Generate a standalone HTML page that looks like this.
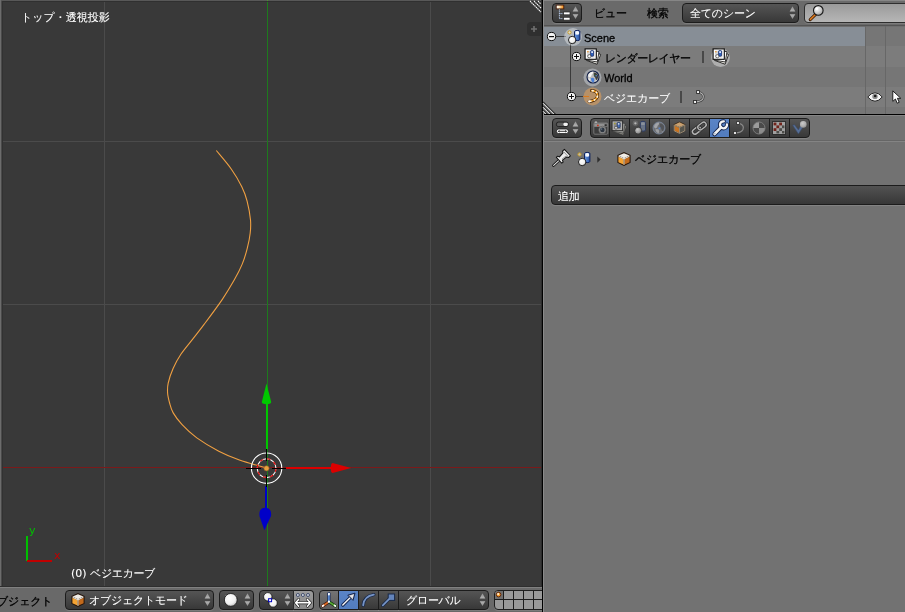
<!DOCTYPE html>
<html lang="ja">
<head>
<meta charset="utf-8">
<title>Blender</title>
<style>
html,body{margin:0;padding:0;}
body{width:905px;height:612px;overflow:hidden;position:relative;background:#727272;
  font-family:"DejaVu Sans","Liberation Sans","WenQuanYi Zen Hei","Noto Sans CJK JP",sans-serif;font-size:11px;line-height:14px;color:#000;}
.abs{position:absolute;}
.t{position:absolute;white-space:nowrap;font-size:11px;line-height:14px;will-change:transform;-webkit-text-stroke:0.3px currentColor;}
.w{color:#fff;-webkit-text-stroke:0.08px currentColor;}
.cj{letter-spacing:-0.2px;}
.la{font-family:"Liberation Sans","DejaVu Sans",sans-serif;}
.btn{position:absolute;box-sizing:border-box;border:1px solid #1c1c1c;border-radius:4px;
  background:linear-gradient(#555555,#383838);box-shadow:0 1px 0 rgba(255,255,255,0.12);}
.ud{position:absolute;width:7px;height:14px;}
svg{position:absolute;overflow:visible;}
</style>
</head>
<body>

<svg width="0" height="0" style="position:absolute;left:-100px;top:-100px;">
  <defs>
    <linearGradient id="gUD" x1="0" y1="0" x2="0" y2="1"><stop offset="0" stop-color="#8e8e8e"/><stop offset="1" stop-color="#b4b4b4"/></linearGradient>
    <linearGradient id="gDU" x1="0" y1="0" x2="0" y2="1"><stop offset="0" stop-color="#b4b4b4"/><stop offset="1" stop-color="#8e8e8e"/></linearGradient>
    <radialGradient id="gSph" cx="0.4" cy="0.35" r="0.75"><stop offset="0" stop-color="#ffffff"/><stop offset="0.6" stop-color="#f0f0f0"/><stop offset="1" stop-color="#b0b0b0"/></radialGradient>
    <radialGradient id="gSphD" cx="0.4" cy="0.35" r="0.75"><stop offset="0" stop-color="#c8c8c8"/><stop offset="0.6" stop-color="#9a9a9a"/><stop offset="1" stop-color="#5a5a5a"/></radialGradient>
    <linearGradient id="gCyl" x1="0" y1="0" x2="1" y2="0"><stop offset="0" stop-color="#6a98e0"/><stop offset="1" stop-color="#2a56a8"/></linearGradient>
    <radialGradient id="gLens" cx="0.35" cy="0.3" r="0.8"><stop offset="0" stop-color="#ffffff"/><stop offset="0.5" stop-color="#d0d0d0"/><stop offset="1" stop-color="#9a9a9a"/></radialGradient>
    <linearGradient id="gBox" x1="0" y1="0" x2="1" y2="0"><stop offset="0" stop-color="#ffffff"/><stop offset="0.35" stop-color="#fff0d0"/><stop offset="1" stop-color="#f08000"/></linearGradient>

    <!-- up/down arrows 7x14 -->
    <symbol id="ud" viewBox="0 0 7 14">
      <path d="M3.5 0.3 L6.3 5.6 H0.7 Z" fill="url(#gUD)"/>
      <path d="M0.7 8.2 H6.3 L3.5 13.1 Z" fill="url(#gDU)"/>
    </symbol>

    <!-- orange cube 14x14 -->
    <symbol id="cube" viewBox="0 0 14 14">
      <path d="M7 0.1 L13.6 3.1 V10.8 L7 13.9 L0.4 10.8 V3.1 Z" fill="#24140a"/>
      <path d="M7 1.2 L12.4 3.6 L7 6.2 L1.6 3.6 Z" fill="#efece6"/>
      <path d="M1.4 4.7 L6.4 7.1 V12.6 L1.4 10.2 Z" fill="#f5a433"/>
      <path d="M12.6 4.7 L7.6 7.1 V12.6 L12.6 10.2 Z" fill="#c26a1c"/>
      <path d="M1.5 4.2 L7 6.9 L12.5 4.2" fill="none" stroke="#fffaf0" stroke-width="1"/>
      <path d="M7 6.9 V12.9" fill="none" stroke="#ffe6c0" stroke-width="1"/>
    </symbol>

    <!-- dimmed cube (object tab) -->
    <symbol id="cubeD" viewBox="0 0 14 14">
      <path d="M7 0.4 L13.2 3.2 V10.6 L7 13.6 L0.8 10.6 V3.2 Z" fill="#3a2a1a"/>
      <path d="M7 1.2 L12.4 3.7 L7 6.2 L1.6 3.7 Z" fill="#c8a070"/>
      <path d="M1.7 4.6 L6.5 6.9 V12.4 L1.7 10.1 Z" fill="#c87422"/>
      <path d="M12.3 4.6 L7.5 6.9 V12.4 L12.3 10.1 Z" fill="#55554e"/>
      <path d="M1.5 4.1 L7 6.8 L12.5 4.1 M7 6.8 V12.8 M1.3 4 V10.4 L7 13.1 L12.7 10.4 V4" fill="none" stroke="#b8a890" stroke-width="0.8"/>
    </symbol>

    <!-- scene icon 16x16 -->
    <symbol id="scene" viewBox="0 0 16 16">
      <circle cx="3.5" cy="3.4" r="1.6" fill="#fff8e0" fill-opacity="0.55" stroke="#c79a1e" stroke-width="0.95"/>
      <path d="M8.5 2.6 Q8.5 1.4 11.2 1.4 Q13.9 1.4 13.9 2.6 V10.4 Q13.9 11.6 11.2 11.6 Q8.5 11.6 8.5 10.4 Z" fill="url(#gCyl)" stroke="#10225c" stroke-width="1"/>
      <path d="M9.3 3 Q9.3 2.1 11.2 2.1 Q13.1 2.1 13.1 3 V5 Q13.1 5.8 11.2 5.8 Q9.3 5.8 9.3 5 Z" fill="#f6f8fc"/>
      <circle cx="6.2" cy="11" r="3.7" fill="url(#gSph)" stroke="#111" stroke-width="0.9"/>
    </symbol>

    <!-- scene icon dimmed -->
    <symbol id="sceneD" viewBox="0 0 16 16">
      <circle cx="3.5" cy="3.4" r="2.8" fill="#a0a0a0" opacity="0.3"/>
      <circle cx="3.5" cy="3.4" r="1.2" fill="#b8b8b8"/>
      <path d="M8.6 2.6 Q8.6 1.4 11.3 1.4 Q14 1.4 14 2.6 V10.4 Q14 11.6 11.3 11.6 Q8.6 11.6 8.6 10.4 Z" fill="#687386" stroke="#2c3c64" stroke-width="1"/>
      <path d="M9.4 3 Q9.4 2.2 11.3 2.2 Q13.2 2.2 13.2 3 V4.6 Q13.2 5.2 11.3 5.2 Q9.4 5.2 9.4 4.6 Z" fill="#8a919c"/>
      <circle cx="6.4" cy="11" r="3.6" fill="url(#gSphD)" stroke="#2e2e2e" stroke-width="0.8"/>
    </symbol>

    <!-- render layers 18x17 -->
    <symbol id="rlayer" viewBox="0 0 18 17">
      <g transform="rotate(20 8 8)"><rect x="4.6" y="3.6" width="11" height="10.4" fill="#f2f0ea" stroke="#1a1a1a" stroke-width="0.8"/><rect x="6.2" y="5.2" width="7.8" height="7.2" fill="#e0d4bc"/></g>
      <g transform="rotate(10 8 8)"><rect x="3.2" y="2.6" width="11" height="10.4" fill="#fbfbfb" stroke="#1a1a1a" stroke-width="0.8"/><rect x="4.8" y="4.2" width="7.8" height="7.2" fill="#dedede"/></g>
      <rect x="1.1" y="0.9" width="11.2" height="10.4" fill="#ffffff" stroke="#0a0a0a" stroke-width="1.1"/>
      <rect x="2.9" y="2.7" width="7.6" height="6.8" fill="#d6d6d6"/>
      <rect x="6.6" y="2.6" width="3" height="5.6" rx="0.9" fill="#2f62c0" stroke="#10225c" stroke-width="0.7"/>
      <rect x="7.3" y="3.2" width="1.6" height="1.8" fill="#eef4ff"/>
      <circle cx="5.3" cy="8.2" r="1.6" fill="#fff" stroke="#222" stroke-width="0.6"/>
      <circle cx="3.9" cy="3.7" r="0.8" fill="#f09020"/>
    </symbol>
    <symbol id="rlayerD" viewBox="0 0 18 17">
      <g transform="rotate(20 8 8)"><rect x="4.6" y="3.6" width="11" height="10.4" fill="#8d8c86" stroke="#3a3a3a" stroke-width="0.7"/></g>
      <g transform="rotate(10 8 8)"><rect x="3.2" y="2.6" width="11" height="10.4" fill="#9a9a96" stroke="#3a3a3a" stroke-width="0.7"/></g>
      <rect x="1.1" y="0.9" width="11.2" height="10.4" fill="#b0b0b0" stroke="#2c2c2c" stroke-width="1"/>
      <rect x="2.9" y="2.7" width="7.6" height="6.8" fill="#8a8a8a"/>
      <rect x="6.6" y="2.6" width="3" height="5.6" rx="0.9" fill="#4a74bc" stroke="#1a2a55" stroke-width="0.7"/>
      <rect x="7.3" y="3.2" width="1.6" height="1.8" fill="#c8d0e0"/>
      <circle cx="5.3" cy="8.2" r="1.6" fill="#cfcfcf" stroke="#333" stroke-width="0.6"/>
      <circle cx="3.9" cy="3.7" r="0.9" fill="#a8a030"/>
    </symbol>

    <!-- world 14x14 -->
    <symbol id="world" viewBox="0 0 14 14">
      <circle cx="7" cy="7" r="6" fill="#bdbdbd" stroke="#14224a" stroke-width="1.1"/>
      <path d="M2.2 5 Q3.4 2 7 1.8 Q7.6 3.4 5.8 4.6 Q5.6 7 3.4 7.4 Q2 6.6 2.2 5 Z" fill="#f4f4f4"/>
      <path d="M7.8 2.6 Q10.8 2.6 12.2 5.6 Q12.4 8.6 10.6 10.4 Q9.4 9.2 9.2 7.6 Q7.2 6.4 7.8 2.6 Z" fill="#3e3e3c"/>
      <path d="M4.8 8.4 Q6.6 7.2 8.2 8.6 Q8.8 10.8 7.4 12.6 Q5.2 12 4.8 8.4 Z" fill="#4a80d8"/>
      <path d="M2.2 8.4 Q3.6 7.8 4.4 9.2 Q4.4 10.8 3.6 11 Q2.6 10 2.2 8.4 Z" fill="#ececec"/>
      <path d="M9.4 10.6 Q10.6 10.4 11.4 9.2 Q11 11 9.8 11.8 Z" fill="#e4e4e4"/>
      <circle cx="10.2" cy="5.8" r="0.8" fill="#4a80d8"/>
      <circle cx="8.8" cy="5" r="0.5" fill="#2c8a2c"/>
    </symbol>
    <symbol id="worldD" viewBox="0 0 14 14">
      <circle cx="7" cy="7" r="6" fill="#6e7074" stroke="#8090ac" stroke-width="0.7"/>
      <path d="M2 5 Q3.4 1.8 7 1.6 Q7.6 3.4 5.8 4.6 Q5.6 7 3.4 7.4 Q1.8 6.6 2 5 Z" fill="#a2a4a8"/>
      <path d="M7.8 2.4 Q10.8 2.4 12.2 5.4 Q12.4 8.6 10.6 10.4 Q9.4 9.2 9.2 7.6 Q7.2 6.4 7.8 2.4 Z" fill="#525458"/>
      <path d="M3.2 8.6 Q5 7.4 6.8 8.6 Q7.6 10.8 6.4 12.4 Q4 11.6 3.2 8.6 Z" fill="#9c9ea2"/>
      <path d="M9.6 10.8 Q10.8 10.4 11.6 9.2 Q11.2 11 10 12 Z" fill="#909296"/>
      <path d="M6.2 6.8 L9 6.4 L7.2 8.8 Z" fill="#5a84c8"/>
    </symbol>

    <!-- object curve (orange) 14x14 -->
    <symbol id="curveO" viewBox="0 0 14 14">
      <path d="M5.6 1.6 Q12.4 2 11.4 7.6 Q10.2 11.6 3.2 12.4" fill="none" stroke="#2a1606" stroke-width="3" stroke-linecap="round"/>
      <path d="M5.6 1.6 Q12.4 2 11.4 7.6 Q10.2 11.6 3.2 12.4" fill="none" stroke="#f09a20" stroke-width="1.8" stroke-linecap="round"/>
      <path d="M5.6 1.6 Q12.4 2 11.4 7.6 Q10.2 11.6 3.2 12.4" fill="none" stroke="#fff4e0" stroke-width="1.6" stroke-dasharray="2 2.4" stroke-dashoffset="0.2"/>
      <rect x="2.2" y="11.4" width="2" height="2" fill="#ffffff"/>
    </symbol>

    <!-- curve data 12x14 -->
    <symbol id="curveD" viewBox="0 0 12 14">
      <path d="M5 2 Q11.8 3.6 10 8.4 Q8.6 11.4 2 12" fill="none" stroke="#3c3c3c" stroke-width="2.4"/>
      <path d="M5 2 Q11.8 3.6 10 8.4 Q8.6 11.4 2 12" fill="none" stroke="#b8b8b8" stroke-width="1.1"/>
      <rect x="3.6" y="0.6" width="2.9" height="2.9" fill="#f4f4f4" stroke="#2a2a2a" stroke-width="0.9"/>
      <rect x="0.6" y="10.5" width="2.9" height="2.9" fill="#f4f4f4" stroke="#2a2a2a" stroke-width="0.9"/>
    </symbol>
    <symbol id="curveDD" viewBox="0 0 12 14">
      <path d="M5 2 Q11.8 3.6 10 8.4 Q8.6 11.4 2 12" fill="none" stroke="#8c8c8c" stroke-width="1.2"/>
      <rect x="3.6" y="0.6" width="2.9" height="2.9" fill="#e0e0e0" stroke="#2a2a2a" stroke-width="0.8"/>
      <rect x="0.6" y="10.5" width="2.9" height="2.9" fill="#e0e0e0" stroke="#2a2a2a" stroke-width="0.8"/>
    </symbol>

    <!-- plus/minus circles 11x11 -->
    <symbol id="plusC" viewBox="0 0 11 11">
      <circle cx="5.5" cy="5.5" r="4.1" fill="#f4f4f4" stroke="#0c0c0c" stroke-width="1"/>
      <rect x="3" y="5" width="5" height="1" fill="#0c0c0c"/><rect x="5" y="3" width="1" height="5" fill="#0c0c0c"/>
    </symbol>
    <symbol id="minusC" viewBox="0 0 11 11">
      <circle cx="5.5" cy="5.5" r="4.1" fill="#f4f4f4" stroke="#0c0c0c" stroke-width="1"/>
      <rect x="3" y="5" width="5" height="1.2" fill="#0c0c0c"/>
    </symbol>
  </defs>
</svg>

<!-- ================= 3D VIEW ================= -->
<div class="abs" id="v3d" style="left:0;top:0;width:542px;height:587px;background:#393939;overflow:hidden;">
  <svg width="542" height="587" viewBox="0 0 542 587" style="left:0;top:0;">
    <!-- grid -->
    <g shape-rendering="crispEdges">
      <rect x="104" y="0" width="1" height="587" fill="#4b4b4b"/>
      <rect x="430" y="0" width="1" height="587" fill="#4b4b4b"/>
      <rect x="0" y="141" width="542" height="1" fill="#4b4b4b"/>
      <rect x="0" y="304" width="542" height="1" fill="#4b4b4b"/>
      <rect x="0" y="467" width="542" height="1" fill="#7a1a1a"/>
      <rect x="267" y="0" width="1" height="587" fill="#1d7a1d"/>
    </g>
    <!-- curve -->
    <path d="M216.3 150.5 C218.8 153.6 227.2 163.1 231.4 169.2 C235.7 175.2 239.2 181.5 241.8 186.8 C244.4 192.1 245.7 195.7 247.1 201.2 C248.5 206.7 250.0 214.7 250.5 220.0 C251.0 225.3 250.7 228.3 250.2 233.0 C249.7 237.7 248.7 242.9 247.3 248.1 C246.0 253.3 244.3 259.1 242.1 264.4 C239.9 269.7 237.5 274.3 234.2 280.1 C230.9 285.9 227.5 291.7 222.5 299.1 C217.5 306.5 209.1 317.7 204.1 324.4 C199.1 331.1 196.5 334.2 192.7 339.1 C188.9 344.0 184.5 348.9 181.2 353.8 C177.9 358.7 175.3 363.6 173.1 368.5 C170.9 373.4 169.1 379.1 168.2 383.2 C167.3 387.3 167.4 389.7 167.6 393.0 C167.8 396.3 168.7 399.7 169.6 403.0 C170.5 406.3 171.1 409.3 173.2 412.9 C175.3 416.5 178.2 420.5 182.1 424.7 C186.0 428.9 190.7 433.5 196.8 437.9 C202.9 442.3 211.7 447.5 218.8 451.2 C225.9 454.9 231.5 457.2 239.4 460.0 C247.3 462.8 262.0 466.7 266.5 468.0"
      fill="none" stroke="#f0a042" stroke-width="1.1"/>
    <!-- manipulator -->
    <g>
      <!-- green up -->
      <rect x="266" y="403" width="2" height="46" fill="#00c800"/>
      <path d="M266.5 383.6 L271.2 402 Q271.4 404 266.5 404.2 Q261.6 404 261.8 402 Z" fill="#00c800"/>
      <!-- red right -->
      <rect x="286" y="467" width="46" height="2" fill="#dc0000"/>
      <path d="M351.2 468 L332.5 463 Q330.8 463.2 330.8 468 Q330.8 472.8 332.5 473 Z" fill="#dc0000"/>
      <!-- blue down -->
      <rect x="265" y="486" width="2" height="23" fill="#0000c8"/>
      <path d="M264.4 530.2 L259.6 516.5 Q258.2 508 265.2 507.8 Q272 508 271 516 Z" fill="#0000c8"/>
      <!-- white circle -->
      <circle cx="266.6" cy="468.2" r="15.2" fill="none" stroke="#ffffff" stroke-width="1.1"/>
    </g>
    <!-- 3d cursor -->
    <g>
      <circle cx="266.6" cy="468.2" r="9.4" fill="none" stroke="#ffffff" stroke-width="1.1"/>
      <circle cx="266.6" cy="468.2" r="9.4" fill="none" stroke="#e00000" stroke-width="1.1" stroke-dasharray="3.69 3.69"/>
      <g shape-rendering="crispEdges" fill="#000">
        <rect x="246" y="468" width="15" height="1"/>
        <rect x="272" y="468" width="14" height="1"/>
        <rect x="266" y="449" width="1" height="12"/>
        <rect x="266" y="475" width="1" height="12"/>
      </g>
      <circle cx="266.5" cy="468.3" r="2.6" fill="#e8a040" stroke="#8a5a20" stroke-width="0.6"/>
    </g>
    <!-- mini axis -->
    <g shape-rendering="crispEdges">
      <rect x="26" y="536" width="2" height="25" fill="#00c000"/>
      <rect x="27" y="560" width="25" height="2" fill="#c00000"/>
    </g>
    <!-- borders -->
    <rect x="0" y="0" width="542" height="1" fill="#585858"/>
    <rect x="267" y="0" width="1" height="1" fill="#4a9a2a"/>
    <rect x="1" y="1" width="541" height="1" fill="#303030"/>
    <rect x="0" y="0" width="1" height="587" fill="#6c6c6c"/>
    <rect x="1" y="1" width="1" height="586" fill="#4a4a4a"/>
    <rect x="2" y="1" width="1" height="586" fill="#323232"/>
    <rect x="541" y="0" width="1" height="587" fill="#2c2c2c"/>
    <!-- corner hatch -->
    <g stroke="#1a1a1a" stroke-width="1">
      <path d="M531.4 1 L541 10.6 M535.4 1 L541 6.6 M539.4 1 L541 2.6"/>
    </g>
    <g stroke="#f4f4f4" stroke-width="1.15" stroke-dasharray="1.5 0.6">
      <path d="M530 1 L541 12 M534 1 L541 8 M538 1 L541 4"/>
    </g>
    <!-- plus region tab -->
    <path d="M541 22 H531 Q527 22 527 26 V32 Q527 36 531 36 H541 Z" fill="#2f2f2f"/>
    <path d="M531 29 H537 M534 26 V32" stroke="#707070" stroke-width="1.6" fill="none"/>
  </svg>
  <div class="t w" style="left:21px;top:11px;">トップ・透視投影</div>
  <div class="t w" style="left:71px;top:567px;">(0) <span style="letter-spacing:-0.4px;">ベジエカーブ</span></div>
  <div class="t" style="left:29px;top:524px;color:#00c000;-webkit-text-stroke:0;">y</div>
  <div class="t" style="left:54px;top:549px;color:#c00000;-webkit-text-stroke:0;">x</div>
</div>
<div class="abs" style="left:0;top:586px;width:542px;height:1px;background:#2e2e2e;"></div>
<div class="abs" style="left:0;top:587px;width:542px;height:1px;background:#808080;"></div>

<!-- ================= 3D VIEW HEADER ================= -->
<div class="abs" id="v3dh" style="left:0;top:588px;width:542px;height:24px;overflow:hidden;background:#696969;">
  <div class="t cj" style="left:-14.5px;top:6.5px;">オブジェクト</div>
  <!-- mode -->
  <div class="btn" style="left:65px;top:2px;width:149px;height:20px;"></div>
  <svg width="14" height="14" style="left:70.5px;top:5px;"><use href="#cube"/></svg>
  <div class="t w cj" style="left:89px;top:6px;letter-spacing:-0.25px;">オブジェクトモード</div>
  <svg class="ud" style="left:204px;top:5px;"><use href="#ud"/></svg>
  <!-- shading -->
  <div class="btn" style="left:219px;top:2px;width:35px;height:20px;"></div>
  <svg width="16" height="16" style="left:223px;top:4px;"><circle cx="7.8" cy="7.9" r="6.4" fill="url(#gSph)" stroke="#111" stroke-width="0.8"/></svg>
  <svg class="ud" style="left:244px;top:5px;"><use href="#ud"/></svg>
  <!-- pivot -->
  <div class="btn" style="left:259px;top:2px;width:35px;height:20px;border-radius:4px 0 0 4px;"></div>
  <svg width="20" height="18" style="left:262px;top:3px;">
    <circle cx="5.8" cy="5.8" r="4.2" fill="url(#gSph)" stroke="#111" stroke-width="0.8"/>
    <circle cx="11.1" cy="12" r="4.2" fill="url(#gSph)" stroke="#111" stroke-width="0.8"/>
    <rect x="6.6" y="7.7" width="3" height="3" fill="#fff" stroke="#0000c0" stroke-width="1"/>
  </svg>
  <svg class="ud" style="left:284px;top:5px;"><use href="#ud"/></svg>
  <div class="btn" style="left:293px;top:2px;width:21px;height:20px;border-radius:0 4px 4px 0;background:linear-gradient(#9c9c9c,#8a8a8a);border-left-color:#2a2a2a;"></div>
  <svg width="20" height="18" style="left:294px;top:3px;">
    <g fill="#d8dce4" stroke="#27365c" stroke-width="0.8">
      <circle cx="3.9" cy="4" r="1.5"/><circle cx="8.9" cy="4" r="1.5"/><circle cx="14" cy="4" r="1.5"/>
    </g>
    <path d="M4.6 8.4 L1.6 11.8 L4.6 15.2 M13.4 8.4 L16.4 11.8 L13.4 15.2 M1.8 11.8 H16.2" fill="none" stroke="#222" stroke-width="2.8" stroke-linecap="round" stroke-linejoin="round"/>
    <path d="M4.6 8.4 L1.6 11.8 L4.6 15.2 M13.4 8.4 L16.4 11.8 L13.4 15.2 M1.8 11.8 H16.2" fill="none" stroke="#fff" stroke-width="1.5" stroke-linecap="round" stroke-linejoin="round"/>
  </svg>
  <!-- manipulators -->
  <div class="btn" style="left:319px;top:2px;width:20px;height:20px;border-radius:4px 0 0 4px;background:linear-gradient(#747474,#5c5c5c);"></div>
  <svg width="18" height="18" style="left:320px;top:3px;">
    <g stroke-linecap="round">
      <path d="M8.9 10.9 L2.6 15" stroke="#4a1a0a" stroke-width="3.2"/>
      <path d="M8.9 10.9 L15.4 15" stroke="#143a0c" stroke-width="3.2"/>
      <path d="M8.9 10.9 V2.6" stroke="#14285a" stroke-width="3.2"/>
      <path d="M8.9 10.9 L2.6 15" stroke="#e0702a" stroke-width="1.7"/>
      <path d="M8.9 10.9 L15.4 15" stroke="#5cae38" stroke-width="1.7"/>
      <path d="M8.9 10.9 V2.6" stroke="#5a8cd6" stroke-width="1.7"/>
      <path d="M3.4 14.5 L2.6 15" stroke="#fff" stroke-width="1.8"/>
      <path d="M14.6 14.5 L15.4 15" stroke="#fff" stroke-width="1.8"/>
      <path d="M8.9 3.6 V2.6" stroke="#fff" stroke-width="1.8"/>
      <circle cx="8.9" cy="10.7" r="1.1" fill="#fff" stroke="none"/>
    </g>
  </svg>
  <div class="btn" style="left:338px;top:2px;width:21px;height:20px;border-radius:0;background:linear-gradient(#5a84c6,#527cbe);"></div>
  <svg width="18" height="18" style="left:340px;top:3px;">
    <path d="M2.8 14 L10 6.8" stroke="#10204a" stroke-width="3.2" stroke-linecap="round"/>
    <path d="M15 2.2 L7.8 4.2 L13 9.4 Z" fill="#b8bcc6" stroke="#10204a" stroke-width="1" stroke-linejoin="round"/>
    <path d="M2.8 14 L9.6 7.2" stroke="#f4f4f4" stroke-width="1.5" stroke-linecap="round"/>
    <path d="M13.6 3.6 L10 4.8 L12.4 7.2 Z" fill="#e8e8ec"/>
  </svg>
  <div class="btn" style="left:358px;top:2px;width:21px;height:20px;border-radius:0;"></div>
  <svg width="18" height="18" style="left:360px;top:3px;">
    <path d="M3.2 14.2 Q4 5.2 13.8 3.6" fill="none" stroke="#182848" stroke-width="3.4" stroke-linecap="round"/>
    <path d="M3.2 14.2 Q4 5.2 13.8 3.6" fill="none" stroke="#7694c6" stroke-width="1.9" stroke-linecap="round"/>
  </svg>
  <div class="btn" style="left:378px;top:2px;width:21px;height:20px;border-radius:0;"></div>
  <svg width="18" height="18" style="left:380px;top:3px;">
    <path d="M2.8 14.4 L9 8.2" stroke="#182848" stroke-width="3.2" stroke-linecap="round"/>
    <rect x="8.2" y="3" width="6.4" height="6.4" fill="#6484ba" stroke="#182848" stroke-width="1"/>
    <path d="M2.8 14.4 L9 8.2" stroke="#7694c6" stroke-width="1.7" stroke-linecap="round"/>
  </svg>
  <div class="btn" style="left:398px;top:2px;width:91px;height:20px;border-radius:0 4px 4px 0;"></div>
  <div class="t w cj" style="left:406px;top:6px;letter-spacing:-0.3px;">グローバル</div>
  <svg class="ud" style="left:479px;top:5px;"><use href="#ud"/></svg>
  <!-- layers -->
  <div class="abs" style="left:494px;top:2px;width:60px;height:20px;box-sizing:border-box;border:1px solid #1e1e1e;border-radius:4px;background:#999999;overflow:hidden;box-shadow:0 1px 0 rgba(255,255,255,0.12);">
    <div class="abs" style="left:0;top:0;width:8px;height:8px;background:#707070;"></div>
    <div class="abs" style="left:0;top:8px;width:60px;height:1px;background:#1c1c1c;"></div>
    <div class="abs" style="left:8px;top:0;width:1px;height:20px;background:#1c1c1c;"></div>
    <div class="abs" style="left:18px;top:0;width:1px;height:20px;background:#1c1c1c;"></div>
    <div class="abs" style="left:28px;top:0;width:1px;height:20px;background:#1c1c1c;"></div>
    <div class="abs" style="left:38px;top:0;width:1px;height:20px;background:#1c1c1c;"></div>
    <div class="abs" style="left:48px;top:0;width:1px;height:20px;background:#1c1c1c;"></div>
    <svg width="8" height="8" style="left:0px;top:0px;"><circle cx="3.6" cy="3.6" r="2.3" fill="#f8a030" stroke="#5a2008" stroke-width="0.9"/><circle cx="3.1" cy="3.1" r="1" fill="#fff4e0"/></svg>
  </div>
</div>

<!-- ================= DIVIDERS ================= -->
<div class="abs" style="left:542px;top:0;width:1px;height:612px;background:#000;"></div>
<div class="abs" style="left:543px;top:0;width:1px;height:612px;background:#8a8a8a;"></div>

<!-- ================= OUTLINER HEADER ================= -->
<div class="abs" id="olh" style="left:544px;top:0;width:361px;height:26px;overflow:hidden;background:#6a6a6a;">
  <div class="abs" style="left:0;top:0;width:361px;height:1px;background:#868686;"></div>
  <div class="btn" style="left:8px;top:3px;width:30px;height:20px;"></div>
  <svg width="16" height="18" style="left:11px;top:4px;">
    <rect x="1.2" y="1.1" width="7.6" height="3.8" fill="url(#gBox)" stroke="#4a1e0a" stroke-width="0.9"/>
    <path d="M4.4 5.4 V14.8 M4.4 9.6 H8 M4.4 14.6 H8" fill="none" stroke="#bcd0f0" stroke-width="0.9" stroke-dasharray="1.2 0.6"/>
    <rect x="8.6" y="8" width="6.4" height="2.8" fill="#ffffff" stroke="#2a2a2a" stroke-width="0.7"/>
    <rect x="8.6" y="13.3" width="6.4" height="2.8" fill="#ffffff" stroke="#2a2a2a" stroke-width="0.7"/>
  </svg>
  <svg class="ud" style="left:28px;top:6px;"><use href="#ud"/></svg>
  <div class="t cj" style="left:49.5px;top:7px;">ビュー</div>
  <div class="t cj" style="left:103px;top:7px;">検索</div>
  <div class="btn" style="left:138px;top:3px;width:117px;height:20px;"></div>
  <div class="t w cj" style="left:146px;top:7px;">全てのシーン</div>
  <svg class="ud" style="left:245px;top:6px;"><use href="#ud"/></svg>
  <div class="btn" style="left:260px;top:3px;width:120px;height:20px;background:linear-gradient(#9a9a9a,#b6b6b6);border-color:#2e2e2e;"></div>
  <svg width="20" height="20" style="left:263px;top:3px;">
    <path d="M8.6 11.4 L3.2 16.6" stroke="#3a1c06" stroke-width="3" stroke-linecap="round"/>
    <path d="M8.2 11.8 L3.4 16.4" stroke="#e07a1c" stroke-width="1.5" stroke-linecap="round"/>
    <circle cx="11.3" cy="7.4" r="4.8" fill="url(#gLens)" stroke="#141414" stroke-width="1.1"/>
    <circle cx="9.8" cy="5.8" r="1.2" fill="#ffffff"/>
  </svg>
  <div class="abs" style="left:0;top:25px;width:361px;height:1px;background:#545454;"></div>
</div>

<!-- ================= OUTLINER BODY ================= -->
<div class="abs" id="olb" style="left:544px;top:26px;width:361px;height:88px;overflow:hidden;background:#767676;">
  <div class="abs" style="left:0;top:0;width:361px;height:1px;background:#6e6e6e;"></div>
  <div class="abs" style="left:0;top:20px;width:361px;height:21px;background:#7c7c7c;"></div>
  <div class="abs" style="left:0;top:61px;width:361px;height:20px;background:#7c7c7c;"></div>
  <div class="abs" style="left:0;top:1px;width:322px;height:19px;background:#878e96;"></div>
  <div class="abs" style="left:321px;top:0;width:1px;height:88px;background:#676767;"></div>
  <div class="abs" style="left:341px;top:0;width:1px;height:88px;background:#676767;"></div>
  <!-- tree lines -->
  <div class="abs" style="left:12px;top:10px;width:10px;height:1px;background:#3a3a3a;"></div>
  <div class="abs" style="left:26px;top:18px;width:1px;height:49px;background:#3a3a3a;"></div>
  <div class="abs" style="left:31px;top:70px;width:9px;height:1px;background:#3a3a3a;"></div>
  <!-- row 1 -->
  <svg width="11" height="11" style="left:2px;top:5px;"><use href="#minusC"/></svg>
  <svg width="18" height="18" style="left:19.8px;top:2px;"><circle cx="9" cy="9" r="8.9" fill="#ffffff" opacity="0.38"/></svg>
  <svg width="16" height="16" style="left:21.5px;top:2.8px;"><use href="#scene"/></svg>
  <div class="t la" style="left:39.5px;top:5px;">Scene</div>
  <!-- row 2 -->
  <svg width="11" height="11" style="left:27px;top:25px;"><use href="#plusC"/></svg>
  <svg width="18" height="17" style="left:40px;top:22.3px;"><use href="#rlayer"/></svg>
  <div class="t cj" style="left:60.8px;top:25.5px;letter-spacing:-0.5px;">レンダーレイヤー</div>
  <div class="abs" style="left:158.2px;top:25px;width:1.6px;height:12px;background:#484848;"></div>
  <svg width="19" height="19" style="left:167px;top:21.5px;"><circle cx="9.5" cy="9.5" r="9.4" fill="#ffffff" opacity="0.38"/></svg>
  <svg width="18" height="17" style="left:168px;top:22.4px;"><use href="#rlayer"/></svg>
  <!-- row 3 -->
  <svg width="19" height="19" style="left:39.2px;top:41.5px;"><circle cx="9.5" cy="9.5" r="9" fill="#dfe6f0" opacity="0.42"/></svg>
  <svg width="14" height="14" style="left:41.7px;top:44.2px;"><use href="#world"/></svg>
  <div class="t la" style="left:60.3px;top:45px;">World</div>
  <!-- row 4 -->
  <svg width="11" height="11" style="left:22px;top:65px;"><use href="#plusC"/></svg>
  <svg width="19" height="19" style="left:39.2px;top:61.3px;"><circle cx="9.5" cy="9.5" r="9" fill="#ffaa50" opacity="0.45"/></svg>
  <div class="abs" style="left:39px;top:70px;width:6px;height:1px;background:#d87a20;"></div>
  <svg width="14" height="14" style="left:41.8px;top:63.4px;"><use href="#curveO"/></svg>
  <div class="t w cj" style="left:60px;top:66px;">ベジエカーブ</div>
  <div class="abs" style="left:136.2px;top:65px;width:1.6px;height:12px;background:#484848;"></div>
  <svg width="12" height="14" style="left:148.9px;top:64px;"><use href="#curveD"/></svg>
  <!-- eye -->
  <svg width="16" height="10" style="left:323px;top:65.5px;">
    <path d="M0.8 5 Q4 0.8 8 0.8 Q12 0.8 15.2 5 Q12 9.2 8 9.2 Q4 9.2 0.8 5 Z" fill="#f4f4f4" stroke="#111" stroke-width="0.9"/>
    <circle cx="8" cy="4.4" r="2.7" fill="#8c8c8c"/>
    <circle cx="8.2" cy="4" r="1.3" fill="#1a1a1a"/>
  </svg>
  <!-- cursor arrow -->
  <svg width="10" height="15" style="left:347.6px;top:63.8px;">
    <path d="M0.8 0.9 V11.4 L3.4 9 L5.2 13.2 L7.2 12.3 L5.4 8.3 H8.8 Z" fill="#ffffff" stroke="#111" stroke-width="0.9" stroke-linejoin="round"/>
  </svg>
</div>

<div class="abs" style="left:544px;top:114px;width:361px;height:1px;background:#000;"></div>
<div class="abs" style="left:544px;top:115px;width:361px;height:1px;background:#858585;"></div>

<svg width="13" height="13" style="left:543px;top:101px;">
  <path d="M0 0 L13 13 H0 Z" fill="#767676"/>
  <g stroke="#141414" stroke-width="1"><path d="M0 0.6 L12.4 13 M0 4.6 L8.4 13 M0 8.6 L4.4 13"/></g>
  <g stroke="#e6e6e6" stroke-width="1"><path d="M0 2.2 L10.8 13 M0 6.2 L6.8 13 M0 10.2 L2.8 13"/></g>
</svg>

<!-- ================= PROPERTIES HEADER ================= -->
<div class="abs" id="prh" style="left:544px;top:116px;width:361px;height:26px;overflow:hidden;">
  <div class="btn" style="left:8px;top:2px;width:30px;height:20px;"></div>
  <svg width="16" height="16" style="left:11px;top:4px;">
    <rect x="1.4" y="2" width="12" height="4.6" rx="2.2" fill="#484848" stroke="#181818" stroke-width="0.8"/>
    <rect x="2" y="2.7" width="7" height="3.2" rx="1.5" fill="#5e5e5e"/>
    <rect x="8.4" y="2.7" width="4.4" height="3.2" rx="1.3" fill="#f2f2f2"/>
    <rect x="1.4" y="9" width="12" height="4.6" rx="2.2" fill="#ffffff" stroke="#181818" stroke-width="0.8"/>
    <path d="M2.6 11.3 L4.6 10 V12.6 Z M12.2 11.3 L10.2 10 V12.6 Z" fill="#1c1c1c"/>
    <path d="M4.4 11.3 H10.4" stroke="#1c1c1c" stroke-width="0.9"/>
  </svg>
  <svg class="ud" style="left:28px;top:5px;"><use href="#ud"/></svg>
  <!-- tabs -->
  <div class="btn" style="left:46px;top:2px;width:220px;height:20px;overflow:hidden;">
    <div class="abs" style="left:119px;top:0;width:19px;height:18px;background:linear-gradient(#5a84c6,#527cbe);"></div>
    <div class="abs" style="left:18px;top:0;width:1px;height:18px;background:#1c1c1c;"></div>
    <div class="abs" style="left:38px;top:0;width:1px;height:18px;background:#1c1c1c;"></div>
    <div class="abs" style="left:58px;top:0;width:1px;height:18px;background:#1c1c1c;"></div>
    <div class="abs" style="left:78px;top:0;width:1px;height:18px;background:#1c1c1c;"></div>
    <div class="abs" style="left:98px;top:0;width:1px;height:18px;background:#1c1c1c;"></div>
    <div class="abs" style="left:118px;top:0;width:1px;height:18px;background:#1c1c1c;"></div>
    <div class="abs" style="left:138px;top:0;width:1px;height:18px;background:#1c1c1c;"></div>
    <div class="abs" style="left:158px;top:0;width:1px;height:18px;background:#1c1c1c;"></div>
    <div class="abs" style="left:178px;top:0;width:1px;height:18px;background:#1c1c1c;"></div>
    <div class="abs" style="left:198px;top:0;width:1px;height:18px;background:#1c1c1c;"></div>
  </div>
  <!-- tab icons (coords relative to header: x-544, y-116) -->
  <!-- camera -->
  <svg width="16" height="14" style="left:48.5px;top:4.6px;opacity:0.88;">
    <rect x="1.6" y="0.6" width="2.6" height="1.8" rx="0.6" fill="#d8d8d8"/>
    <rect x="0.8" y="2" width="14" height="11.2" rx="1" fill="#3c3c3c" stroke="#8a8a8a" stroke-width="0.8"/>
    <rect x="1.2" y="2.4" width="13.2" height="3.4" fill="#9c9c9c"/>
    <rect x="11.6" y="3.2" width="2.2" height="2" fill="#2a2a2a"/>
    <circle cx="4.9" cy="4.4" r="0.9" fill="#e03010"/>
    <circle cx="9.4" cy="8.9" r="3.7" fill="#9a9a9a" stroke="#5a5a5a" stroke-width="0.6"/>
    <circle cx="9.4" cy="8.9" r="2.3" fill="#2a3440"/>
    <circle cx="8.6" cy="8.1" r="0.8" fill="#6a7a90"/>
  </svg>
  <!-- render layers -->
  <svg width="17" height="16" style="left:66.8px;top:3.8px;" viewBox="0 0 18 17"><use href="#rlayerD"/></svg>
  <!-- scene -->
  <svg width="15.5" height="15.5" style="left:87.5px;top:4px;" viewBox="0 0 16 16"><use href="#sceneD"/></svg>
  <!-- world -->
  <svg width="14" height="14" style="left:108px;top:4.5px;"><use href="#worldD"/></svg>
  <!-- object -->
  <svg width="13" height="13.5" style="left:129px;top:4.8px;" viewBox="0 0 14 14"><use href="#cubeD"/></svg>
  <!-- constraints -->
  <svg width="18" height="16" style="left:146px;top:4px;">
    <g fill="none" stroke-linecap="round">
      <g transform="rotate(-38 6.6 10.4)"><rect x="2" y="7.9" width="9.2" height="5" rx="2.5" stroke="#2e2e2e" stroke-width="2.8"/><rect x="2" y="7.9" width="9.2" height="5" rx="2.5" stroke="#b4b4b4" stroke-width="1.4"/></g>
      <g transform="rotate(-38 12 6)"><rect x="7.4" y="3.5" width="9.2" height="5" rx="2.5" stroke="#2e2e2e" stroke-width="2.8"/><rect x="7.4" y="3.5" width="9.2" height="5" rx="2.5" stroke="#b4b4b4" stroke-width="1.4"/></g>
    </g>
  </svg>
  <!-- modifiers (active) -->
  <svg width="18" height="18" style="left:167px;top:3px;">
    <g fill="none" stroke-linecap="round">
      <path d="M3.6 15 L10 8.3" stroke="#16264e" stroke-width="4.6"/>
      <path d="M12.8 2.3 A3.5 3.5 0 1 0 16 5.5" stroke="#16264e" stroke-width="4.2"/>
      <path d="M3.6 15 L10 8.3" stroke="#f4f4f4" stroke-width="2.6"/>
      <path d="M12.8 2.3 A3.5 3.5 0 1 0 16 5.5" stroke="#f4f4f4" stroke-width="2.3"/>
      <circle cx="3.9" cy="14.7" r="0.7" fill="#8aa0c8" stroke="none"/>
    </g>
  </svg>
  <!-- data (curve) -->
  <svg width="12" height="14" style="left:189px;top:5px;"><use href="#curveDD"/></svg>
  <!-- material -->
  <svg width="14" height="14" style="left:208.4px;top:4.8px;">
    <circle cx="7" cy="7" r="6" fill="#4a4a4a"/>
    <path d="M7 7 V1 A6 6 0 0 0 1 7 Z" fill="#9c9c9c"/>
    <path d="M7 7 V13 A6 6 0 0 0 13 7 Z" fill="#8c8c8c"/>
    <circle cx="7" cy="7" r="6" fill="none" stroke="#808080" stroke-width="0.9"/>
  </svg>
  <!-- texture -->
  <svg width="14" height="14" style="left:228.4px;top:5px;opacity:0.8;">
    <rect x="0.5" y="0.5" width="13" height="13" fill="#b8b8b8" stroke="#2a2a2a" stroke-width="1"/>
    <g fill="#7c1a10"><rect x="1.6" y="1.6" width="2.8" height="2.8"/><rect x="7.2" y="1.6" width="2.8" height="2.8"/><rect x="4.4" y="4.4" width="2.8" height="2.8"/><rect x="1.6" y="7.2" width="2.8" height="2.8"/></g>
    <g fill="#50504c"><rect x="10" y="4.4" width="2.4" height="2.8"/><rect x="7.2" y="7.2" width="2.8" height="2.8"/><rect x="4.4" y="10" width="2.8" height="2.4"/><rect x="10" y="10" width="2.4" height="2.4"/></g>
  </svg>
  <!-- physics -->
  <svg width="16" height="16" style="left:247px;top:3.6px;opacity:0.9;">
    <path d="M1.6 5.2 L7.4 14 L12.4 6.6 L9.6 5.8 L7.4 9.8 L3.6 4.8 Z" fill="#58739f" stroke="#3a4a6a" stroke-width="0.6" stroke-linejoin="round"/>
    <circle cx="12.3" cy="4.4" r="3.3" fill="url(#gSphD)"/>
    <circle cx="12.3" cy="4.4" r="3.3" fill="#ffffff" opacity="0.3"/>
  </svg>
  <div class="abs" style="left:0;top:24px;width:361px;height:1px;background:#666666;"></div>
  <div class="abs" style="left:0;top:25px;width:361px;height:1px;background:#848484;"></div>
</div>

<!-- ================= PROPERTIES BODY ================= -->
<div class="abs" id="prb" style="left:544px;top:142px;width:361px;height:470px;overflow:hidden;">
  <!-- pin -->
  <svg width="18" height="18" style="left:8px;top:8px;">
    <g transform="translate(1.5 15.5) rotate(-43)">
      <path d="M0 0 L8 0" stroke="#111" stroke-width="2.6" stroke-linecap="round"/>
      <path d="M0.2 0 L8 0" stroke="#e4e4e4" stroke-width="1.1" stroke-linecap="round"/>
      <path d="M7.6 -4 L9.4 -4 L10.2 -2.2 L15.6 -2.8 L16.4 -4.4 L19 -4.4 L19 4.4 L16.4 4.4 L15.6 2.8 L10.2 2.2 L9.4 4 L7.6 4 Z" fill="#ededed" stroke="#111" stroke-width="1" stroke-linejoin="round"/>
      <path d="M10.4 1.2 L15.6 1.6 M16.8 -3.4 V3.4" stroke="#8c8c8c" stroke-width="0.9" fill="none"/>
    </g>
  </svg>
  <svg width="16" height="16" style="left:31.5px;top:8.8px;"><use href="#scene"/></svg>
  <svg width="5" height="8" style="left:53px;top:13.6px;"><path d="M0.3 0.4 L3.6 3.6 L0.3 6.8 Z" fill="#2e2e2e"/></svg>
  <svg width="14" height="14" style="left:72.8px;top:10px;"><use href="#cube"/></svg>
  <div class="t cj" style="left:91px;top:11px;">ベジエカーブ</div>
  <div class="btn" style="left:7px;top:43px;width:380px;height:20px;background:linear-gradient(#525252,#373737);"></div>
  <div class="t w cj" style="left:14px;top:48px;">追加</div>
</div>

</body>
</html>
